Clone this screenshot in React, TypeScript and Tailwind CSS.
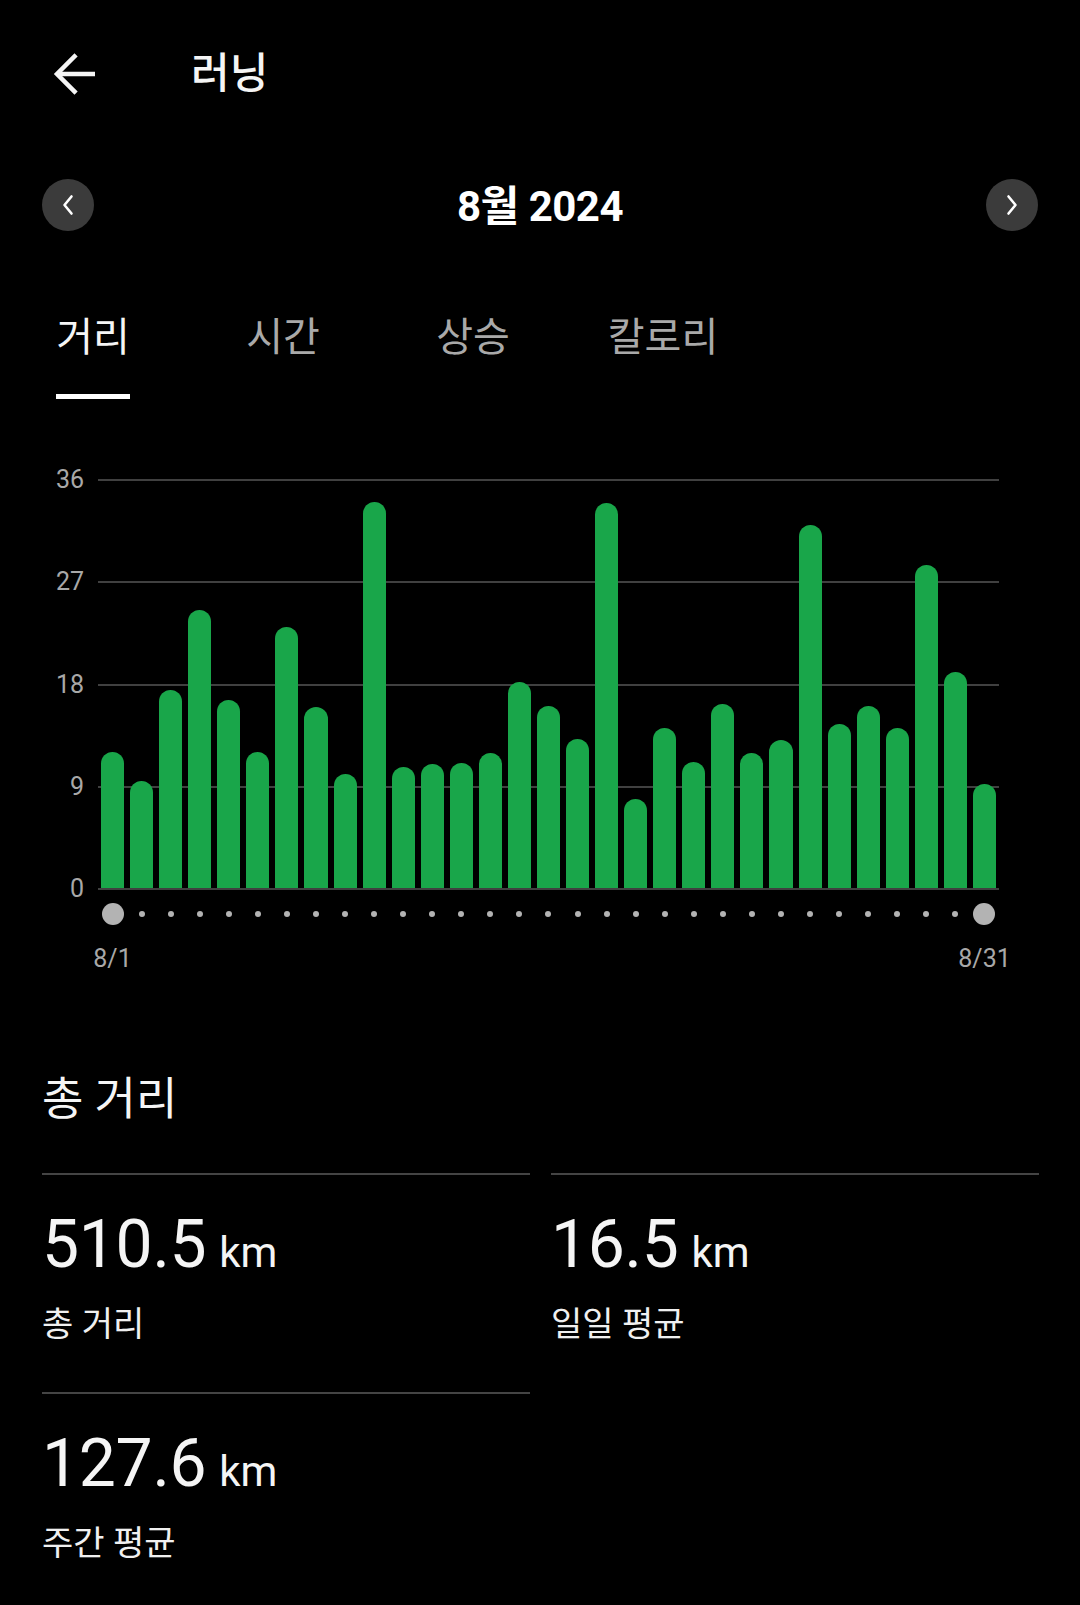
import React from "react";

const values = [
  12.1, 9.5, 17.5, 24.6, 16.6, 12.1, 23.1, 16.0, 10.1, 34.1,
  10.7, 11.0, 11.1, 12.0, 18.2, 16.1, 13.2, 34.0, 7.9, 14.2,
  11.2, 16.3, 12.0, 13.1, 32.0, 14.5, 16.1, 14.2, 28.5, 19.1, 9.2,
];

const PX_PER_UNIT = 409 / 36;
const gridLines = [
  { label: "36", top: 0 },
  { label: "27", top: 102.25 },
  { label: "18", top: 204.5 },
  { label: "9", top: 306.75 },
  { label: "0", top: 409 },
];

function BackArrow() {
  return (
    <svg width="44" height="42" viewBox="0 0 44 42" fill="none">
      <path d="M43 21H5" stroke="#f5f5f5" strokeWidth="4.5" />
      <path d="M22.5 3.5L5 21L22.5 38.5" stroke="#f5f5f5" strokeWidth="4.5" strokeLinecap="square" />
    </svg>
  );
}

function Chevron({ dir }: { dir: "left" | "right" }) {
  return (
    <svg width="14" height="22" viewBox="0 0 14 22" fill="none">
      {dir === "left" ? (
        <path d="M10.5 2.5L3.5 11L10.5 19.5" stroke="#ffffff" strokeWidth="2.6" strokeLinecap="round" strokeLinejoin="round" />
      ) : (
        <path d="M3.5 2.5L10.5 11L3.5 19.5" stroke="#ffffff" strokeWidth="2.6" strokeLinecap="round" strokeLinejoin="round" />
      )}
    </svg>
  );
}

function Stat({ value, label }: { value: string; label: string }) {
  return (
    <div className="border-t-2 border-[#444444] h-[219px]">
      <div className="mt-[37px] flex items-baseline leading-none">
        <span className="text-[66px] text-[#f5f5f5] tracking-[-0.3px]">{value}</span>
        <span className="ml-[13px] text-[42px] text-[#f5f5f5]">km</span>
      </div>
      <div className="mt-[25px] text-[34px] leading-[42px] text-[#f0f0f0]">{label}</div>
    </div>
  );
}

export default function App() {
  return (
    <div
      className="w-[1080px] min-h-[1605px] bg-black text-white"
      style={{ fontFamily: 'Roboto, "Noto Sans CJK KR", sans-serif' }}
    >
      {/* Header */}
      <div className="h-[148px] flex items-center">
        <div className="ml-[52px]">
          <BackArrow />
        </div>
        <div className="ml-[95px] text-[42px] font-medium leading-none text-[#f5f5f5]">러닝</div>
      </div>

      {/* Month selector */}
      <div className="mt-[31px] h-[52px] px-[42px] flex items-center justify-between">
        <button className="w-[52px] h-[52px] rounded-full bg-[#3b3b3b] flex items-center justify-center">
          <Chevron dir="left" />
        </button>
        <div className="text-[42px] font-bold leading-none text-white tracking-[-0.5px] mt-[4px]">8월 2024</div>
        <button className="w-[52px] h-[52px] rounded-full bg-[#3b3b3b] flex items-center justify-center">
          <Chevron dir="right" />
        </button>
      </div>

      {/* Tabs */}
      <div className="mt-[83px] flex -ml-[2px]">
        {["거리", "시간", "상승", "칼로리"].map((t, i) => (
          <div key={t} className="w-[190px] flex flex-col items-center">
            <div
              className={
                "text-[40px] leading-[48px] " + (i === 0 ? "text-[#f5f5f5]" : "text-[#a9a9a9]")
              }
            >
              {t}
            </div>
            <div className={"mt-[32px] h-[5px] w-[74px] " + (i === 0 ? "bg-white" : "bg-transparent")} />
          </div>
        ))}
      </div>

      {/* Chart */}
      <div className="mt-[81px] ml-[98px] w-[901px]">
        <div className="relative h-[409px]">
          {gridLines.map((g) => (
            <React.Fragment key={g.label}>
              <div
                className="absolute left-0 right-0 h-[2px] bg-[#404040]"
                style={{ top: g.top - 1 }}
              />
              <div
                className="absolute left-[-98px] w-[84px] text-right text-[25px] leading-[28px] text-[#a8a8a8]"
                style={{ top: g.top - 14 }}
              >
                {g.label}
              </div>
            </React.Fragment>
          ))}
          <div className="absolute inset-0 flex items-end">
            {values.map((v, i) => (
              <div key={i} className="flex-1 px-[3px] flex items-end h-full">
                <div
                  className="w-full bg-[#19a64a] rounded-t-full"
                  style={{ height: v * PX_PER_UNIT }}
                />
              </div>
            ))}
          </div>
          <div className="absolute left-0 right-0 bottom-[-1px] h-[2px] bg-[#404040]" />
        </div>

        {/* dots */}
        <div className="h-[50px] flex items-center">
          {values.map((_, i) => (
            <div key={i} className="flex-1 flex items-center justify-center">
              {i === 0 || i === values.length - 1 ? (
                <div className="w-[22px] h-[22px] rounded-full bg-[#b3b3b3]" />
              ) : (
                <div className="w-[6px] h-[6px] rounded-full bg-[#b3b3b3]" />
              )}
            </div>
          ))}
        </div>

        {/* date labels */}
        <div className="mt-[6px] flex justify-between">
          <div className="w-[29px] flex justify-center whitespace-nowrap text-[25px] leading-[28px] text-[#a8a8a8]">
            8/1
          </div>
          <div className="w-[29px] flex justify-center whitespace-nowrap text-[25px] leading-[28px] text-[#a8a8a8]">
            8/31
          </div>
        </div>
      </div>

      {/* Summary */}
      <div className="px-[42px] pr-[41px]">
        <div className="mt-[100px] text-[45px] leading-[54px] text-[#f5f5f5]">총 거리</div>
        <div className="mt-[46px] grid grid-cols-2 gap-x-[21px]">
          <Stat value="510.5" label="총 거리" />
          <Stat value="16.5" label="일일 평균" />
          <Stat value="127.6" label="주간 평균" />
        </div>
      </div>
    </div>
  );
}
